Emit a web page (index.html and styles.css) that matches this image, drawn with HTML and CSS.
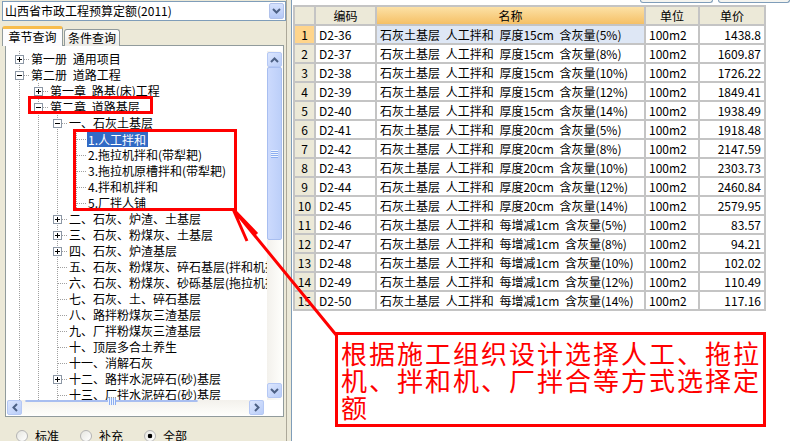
FILE: index.html
```html
<!DOCTYPE html>
<html lang="zh-CN">
<head>
<meta charset="utf-8">
<title>定额查询</title>
<link rel="stylesheet" href="styles.css">
</head>
<body>
<div class="app">
  <div class="left">
    <div class="combo">
      <span class="combo-text">山西省市政工程预算定额(2011)</span>
      <span class="combo-btn"><svg width="9" height="6" viewBox="0 0 9 6"><path d="M1 1l3.5 3.5L8 1" fill="none" stroke="#4D6185" stroke-width="2"/></svg></span>
    </div>
    <div class="tabs">
      <div class="tab active">章节查询</div>
      <div class="tab inactive">条件查询</div>
    </div>
    <div class="tabpage">
      <div class="treectl">
        <div class="tree-main">
          <div class="tree">
            <div class="row"><span class="br"><svg class="pm" width="9" height="9" viewBox="0 0 9 9"><rect x="0.5" y="0.5" width="8" height="8" fill="#fff" stroke="#8C97A5"/><path d="M2 4.5h5M4.5 2v5" stroke="#000"/></svg><i class="h"></i></span><span class="t">第一册 通用项目</span></div>
            <div class="row"><span class="br"><svg class="pm" width="9" height="9" viewBox="0 0 9 9"><rect x="0.5" y="0.5" width="8" height="8" fill="#fff" stroke="#8C97A5"/><path d="M2 4.5h5" stroke="#000"/></svg><i class="h"></i></span><span class="t">第二册 道路工程</span></div>
            <div class="row"><i class="g"></i><span class="br"><svg class="pm" width="9" height="9" viewBox="0 0 9 9"><rect x="0.5" y="0.5" width="8" height="8" fill="#fff" stroke="#8C97A5"/><path d="M2 4.5h5M4.5 2v5" stroke="#000"/></svg><i class="h"></i></span><span class="t">第一章 路基(床)工程</span></div>
            <div class="row"><i class="g"></i><span class="br"><svg class="pm" width="9" height="9" viewBox="0 0 9 9"><rect x="0.5" y="0.5" width="8" height="8" fill="#fff" stroke="#8C97A5"/><path d="M2 4.5h5" stroke="#000"/></svg><i class="h"></i></span><span class="t">第二章 道路基层</span></div>
            <div class="row"><i class="g"></i><i class="g"></i><span class="br"><svg class="pm" width="9" height="9" viewBox="0 0 9 9"><rect x="0.5" y="0.5" width="8" height="8" fill="#fff" stroke="#8C97A5"/><path d="M2 4.5h5" stroke="#000"/></svg><i class="h"></i></span><span class="t">一、石灰土基层</span></div>
            <div class="row"><i class="g"></i><i class="g"></i><i class="g"></i><span class="br leaf"><i class="h"></i></span><span class="t sel">1.人工拌和</span></div>
            <div class="row"><i class="g"></i><i class="g"></i><i class="g"></i><span class="br leaf"><i class="h"></i></span><span class="t">2.拖拉机拌和(带犁耙)</span></div>
            <div class="row"><i class="g"></i><i class="g"></i><i class="g"></i><span class="br leaf"><i class="h"></i></span><span class="t">3.拖拉机原槽拌和(带犁耙)</span></div>
            <div class="row"><i class="g"></i><i class="g"></i><i class="g"></i><span class="br leaf"><i class="h"></i></span><span class="t">4.拌和机拌和</span></div>
            <div class="row"><i class="g"></i><i class="g"></i><i class="g"></i><span class="br leaf last"><i class="h"></i></span><span class="t">5.厂拌人铺</span></div>
            <div class="row"><i class="g"></i><i class="g"></i><span class="br"><svg class="pm" width="9" height="9" viewBox="0 0 9 9"><rect x="0.5" y="0.5" width="8" height="8" fill="#fff" stroke="#8C97A5"/><path d="M2 4.5h5M4.5 2v5" stroke="#000"/></svg><i class="h"></i></span><span class="t">二、石灰、炉渣、土基层</span></div>
            <div class="row"><i class="g"></i><i class="g"></i><span class="br"><svg class="pm" width="9" height="9" viewBox="0 0 9 9"><rect x="0.5" y="0.5" width="8" height="8" fill="#fff" stroke="#8C97A5"/><path d="M2 4.5h5M4.5 2v5" stroke="#000"/></svg><i class="h"></i></span><span class="t">三、石灰、粉煤灰、土基层</span></div>
            <div class="row"><i class="g"></i><i class="g"></i><span class="br"><svg class="pm" width="9" height="9" viewBox="0 0 9 9"><rect x="0.5" y="0.5" width="8" height="8" fill="#fff" stroke="#8C97A5"/><path d="M2 4.5h5M4.5 2v5" stroke="#000"/></svg><i class="h"></i></span><span class="t">四、石灰、炉渣基层</span></div>
            <div class="row"><i class="g"></i><i class="g"></i><span class="br leaf"><i class="h"></i></span><span class="t">五、石灰、粉煤灰、碎石基层(拌和机拌和)</span></div>
            <div class="row"><i class="g"></i><i class="g"></i><span class="br leaf"><i class="h"></i></span><span class="t">六、石灰、粉煤灰、砂砾基层(拖拉机拌和)</span></div>
            <div class="row"><i class="g"></i><i class="g"></i><span class="br leaf"><i class="h"></i></span><span class="t">七、石灰、土、碎石基层</span></div>
            <div class="row"><i class="g"></i><i class="g"></i><span class="br leaf"><i class="h"></i></span><span class="t">八、路拌粉煤灰三渣基层</span></div>
            <div class="row"><i class="g"></i><i class="g"></i><span class="br leaf"><i class="h"></i></span><span class="t">九、厂拌粉煤灰三渣基层</span></div>
            <div class="row"><i class="g"></i><i class="g"></i><span class="br leaf"><i class="h"></i></span><span class="t">十、顶层多合土养生</span></div>
            <div class="row"><i class="g"></i><i class="g"></i><span class="br leaf"><i class="h"></i></span><span class="t">十一、消解石灰</span></div>
            <div class="row"><i class="g"></i><i class="g"></i><span class="br"><svg class="pm" width="9" height="9" viewBox="0 0 9 9"><rect x="0.5" y="0.5" width="8" height="8" fill="#fff" stroke="#8C97A5"/><path d="M2 4.5h5M4.5 2v5" stroke="#000"/></svg><i class="h"></i></span><span class="t">十二、路拌水泥碎石(砂)基层</span></div>
            <div class="row"><i class="g"></i><i class="g"></i><span class="br leaf"><i class="h"></i></span><span class="t">十三、厂拌水泥碎石(砂)基层</span></div>
          </div>
          <div class="vscroll">
            <div class="sb"><svg width="9" height="6" viewBox="0 0 9 6"><path d="M1 5l3.5-3.5L8 5" fill="none" stroke="#4D6185" stroke-width="2"/></svg></div>
            <div class="thumb v"><span class="grip v"></span></div>
            <div class="track"></div>
            <div class="sb"><svg width="9" height="6" viewBox="0 0 9 6"><path d="M1 1l3.5 3.5L8 1" fill="none" stroke="#4D6185" stroke-width="2"/></svg></div>
          </div>
        </div>
        <div class="hrow">
          <div class="hscroll">
            <div class="sb"><svg width="6" height="9" viewBox="0 0 6 9"><path d="M5 1L1.5 4.5L5 8" fill="none" stroke="#4D6185" stroke-width="2"/></svg></div>
            <div class="thumb h"><span class="grip h"></span></div>
            <div class="track"></div>
            <div class="sb"><svg width="6" height="9" viewBox="0 0 6 9"><path d="M1 1l3.5 3.5L1 8" fill="none" stroke="#4D6185" stroke-width="2"/></svg></div>
          </div>
          <div class="corner"></div>
        </div>
      </div>
    </div>
    <div class="radios">
      <label class="radio"><span class="dot"></span>标准</label>
      <label class="radio"><span class="dot"></span>补充</label>
      <label class="radio"><span class="dot on"></span>全部</label>
    </div>
  </div>
  <div class="splitter"></div>
  <div class="right">
    <div class="topbar"><span class="tbtn b1"></span><span class="tbtn b2"></span></div>
    <table class="grid">
      <thead>
        <tr><th class="c0"></th><th class="c1">编码</th><th class="c2 sorted">名称</th><th class="c3">单位</th><th class="c4">单价</th></tr>
      </thead>
      <tbody>
        <tr class="cur"><td class="n">1</td><td>D2-36</td><td class="nm">石灰土基层 人工拌和 厚度15cm 含灰量(5%)</td><td>100m2</td><td class="p">1438.8</td></tr>
        <tr><td class="n">2</td><td>D2-37</td><td class="nm">石灰土基层 人工拌和 厚度15cm 含灰量(8%)</td><td>100m2</td><td class="p">1609.87</td></tr>
        <tr><td class="n">3</td><td>D2-38</td><td class="nm">石灰土基层 人工拌和 厚度15cm 含灰量(10%)</td><td>100m2</td><td class="p">1726.22</td></tr>
        <tr><td class="n">4</td><td>D2-39</td><td class="nm">石灰土基层 人工拌和 厚度15cm 含灰量(12%)</td><td>100m2</td><td class="p">1849.41</td></tr>
        <tr><td class="n">5</td><td>D2-40</td><td class="nm">石灰土基层 人工拌和 厚度15cm 含灰量(14%)</td><td>100m2</td><td class="p">1938.49</td></tr>
        <tr><td class="n">6</td><td>D2-41</td><td class="nm">石灰土基层 人工拌和 厚度20cm 含灰量(5%)</td><td>100m2</td><td class="p">1918.48</td></tr>
        <tr><td class="n">7</td><td>D2-42</td><td class="nm">石灰土基层 人工拌和 厚度20cm 含灰量(8%)</td><td>100m2</td><td class="p">2147.59</td></tr>
        <tr><td class="n">8</td><td>D2-43</td><td class="nm">石灰土基层 人工拌和 厚度20cm 含灰量(10%)</td><td>100m2</td><td class="p">2303.73</td></tr>
        <tr><td class="n">9</td><td>D2-44</td><td class="nm">石灰土基层 人工拌和 厚度20cm 含灰量(12%)</td><td>100m2</td><td class="p">2460.84</td></tr>
        <tr><td class="n">10</td><td>D2-45</td><td class="nm">石灰土基层 人工拌和 厚度20cm 含灰量(14%)</td><td>100m2</td><td class="p">2579.95</td></tr>
        <tr><td class="n">11</td><td>D2-46</td><td class="nm">石灰土基层 人工拌和 每增减1cm 含灰量(5%)</td><td>100m2</td><td class="p">83.57</td></tr>
        <tr><td class="n">12</td><td>D2-47</td><td class="nm">石灰土基层 人工拌和 每增减1cm 含灰量(8%)</td><td>100m2</td><td class="p">94.21</td></tr>
        <tr><td class="n">13</td><td>D2-48</td><td class="nm">石灰土基层 人工拌和 每增减1cm 含灰量(10%)</td><td>100m2</td><td class="p">102.02</td></tr>
        <tr><td class="n">14</td><td>D2-49</td><td class="nm">石灰土基层 人工拌和 每增减1cm 含灰量(12%)</td><td>100m2</td><td class="p">110.49</td></tr>
        <tr><td class="n">15</td><td>D2-50</td><td class="nm">石灰土基层 人工拌和 每增减1cm 含灰量(14%)</td><td>100m2</td><td class="p">117.16</td></tr>
      </tbody>
    </table>
  </div>
</div>
<div class="note">根据施工组织设计选择人工、拖拉机、拌和机、厂拌合等方式选择定额</div>
<svg class="marks" width="795" height="441" viewBox="0 0 795 441">
  <rect x="29.5" y="97.5" width="122" height="15" fill="none" stroke="#FF0000" stroke-width="3"/>
  <rect x="74.5" y="130.5" width="161" height="79" fill="none" stroke="#FF0000" stroke-width="3"/>
  <path d="M233 209L337 336M233 209L257 234M233 209L247 241" fill="none" stroke="#FF0000" stroke-width="3"/>
</svg>
</body>
</html>
```
FILE: styles.css
```css
body {
  margin: 0;
  width: 795px;
  height: 441px;
  overflow: hidden;
  position: relative;
  background: #ECE9D8;
  font-family: "Noto Sans CJK SC", sans-serif;
  font-size: 12px;
  color: #000;
}

.app {
  display: flex;
  height: 441px;
}

/* ---------- left panel ---------- */
.left {
  width: 286px;
  flex: none;
}

.combo {
  margin: 1px 0 0 2px;
  width: 284px;
  height: 20px;
  box-sizing: border-box;
  border: 1px solid #7F9DB9;
  background: #fff;
  display: flex;
  align-items: center;
  justify-content: space-between;
}

.combo-text {
  padding-left: 2px;
  line-height: 16px;
  white-space: nowrap;
}

.combo-btn {
  width: 15px;
  height: 16px;
  margin-right: 1px;
  box-sizing: border-box;
  border: 1px solid #B1C2EB;
  border-radius: 2px;
  background: linear-gradient(#D6E2FD, #B4C8F6);
  display: flex;
  align-items: center;
  justify-content: center;
}

.tabs {
  display: flex;
  align-items: flex-end;
  margin-top: 5px;
  padding-left: 2px;
  height: 20px;
}

.tab {
  box-sizing: border-box;
  border: 1px solid #919B9C;
  border-bottom: none;
  border-radius: 3px 3px 0 0;
  text-align: center;
  white-space: nowrap;
}

.tab.active {
  width: 61px;
  height: 20px;
  border-top: 3px solid #F8BD4C;
  background: #FCFCFE;
  line-height: 16px;
  position: relative;
  z-index: 1;
}

.tab.inactive {
  width: 56px;
  height: 17px;
  margin-left: 1px;
  background: linear-gradient(#FFFFFF, #ECEBE6);
  line-height: 15px;
}

.tabpage {
  margin: -1px 0 0 5px;
  width: 279px;
  height: 372px;
  box-sizing: border-box;
  border: 1px solid #919B9C;
  background: #fff;
  padding: 5px 0 1px 0;
}

.treectl {
  display: flex;
  flex-direction: column;
  height: 364px;
}

.tree-main {
  display: flex;
  height: 349px;
}

.tree {
  flex: 1;
  min-width: 0;
  overflow: hidden;
  padding-left: 4px;
}

.row {
  display: flex;
  height: 16px;
  line-height: 16px;
  white-space: nowrap;
  word-spacing: 3px;
}

.g,
.br {
  flex: none;
  width: 19px;
  height: 16px;
  background-image: linear-gradient(#A0A0A0 50%, transparent 50%);
  background-size: 1px 2px;
  background-repeat: repeat-y;
  background-position: 9px 0;
}

.br {
  display: flex;
  align-items: center;
}

.br.last {
  background-size: 1px 2px;
  background-repeat: repeat-y;
  background-image: linear-gradient(#A0A0A0 50%, transparent 50%);
}

.pm {
  display: block;
  flex: none;
  margin-left: 5px;
}

.h {
  display: block;
  width: 5px;
  height: 0;
  border-top: 1px dotted #A0A0A0;
}

.leaf .h {
  margin-left: 10px;
  width: 9px;
}

.t {
  margin-left: 2px;
}

.t.sel {
  margin-left: 1px;
  padding: 0 2px 0 1px;
  height: 15px;
  line-height: 15px;
  margin-top: 1px;
  background: #316AC5;
  color: #fff;
}

/* scrollbars */
.vscroll {
  width: 15px;
  margin-right: 1px;
  flex: none;
  display: flex;
  flex-direction: column;
  padding: 1px 0 2px;
  box-sizing: border-box;
  background: linear-gradient(90deg, #F3F1EC, #FEFEFB);
}

.sb {
  flex: none;
  width: 15px;
  height: 15px;
  box-sizing: border-box;
  border: 1px solid #B5C8F4;
  border-radius: 2px;
  background: linear-gradient(135deg, #DCE6FE, #B9CDF8);
  display: flex;
  align-items: center;
  justify-content: center;
}

.thumb {
  box-sizing: border-box;
  border: 1px solid #A8BEF0;
  border-radius: 2px;
  display: flex;
  align-items: center;
  justify-content: center;
}

.thumb.v {
  height: 173px;
  background: linear-gradient(90deg, #CCDAFD, #BCCFF9);
}

.thumb.h {
  width: 173px;
  margin-left: 3px;
  background: linear-gradient(#CCDAFD, #BCCFF9);
}

.grip.v {
  width: 7px;
  height: 8px;
  background: repeating-linear-gradient(#EEF4FE 0 1px, #8CAEF0 1px 2px);
}

.grip.h {
  width: 8px;
  height: 7px;
  background: repeating-linear-gradient(90deg, #EEF4FE 0 1px, #8CAEF0 1px 2px);
}

.track {
  flex: 1;
}

.hrow {
  display: flex;
  height: 15px;
}

.hscroll {
  width: 257px;
  margin-left: 1px;
  display: flex;
  background: linear-gradient(#F3F1EC, #FEFEFB);
}

.corner {
  flex: 1;
  background: #fff;
}

/* radios */
.radios {
  display: flex;
  margin-top: 11px;
  padding-left: 16px;
  line-height: 16px;
}

.radio {
  width: 64px;
  display: flex;
  align-items: center;
}

.dot {
  width: 12px;
  height: 12px;
  margin-right: 7px;
  box-sizing: border-box;
  border: 1px solid #B4B4B4;
  border-radius: 50%;
  background: linear-gradient(135deg, #E6E6E0, #FFFFFF);
}

.dot.on {
  background: radial-gradient(circle, #000 0 2px, transparent 2.6px), linear-gradient(135deg, #E6E6E0, #FFFFFF);
}

/* ---------- splitter ---------- */
.splitter {
  flex: none;
  width: 6px;
  box-sizing: border-box;
  border-left: 1px solid #ACA899;
  border-right: 1px solid #7F9DB9;
}

/* ---------- right panel ---------- */
.right {
  flex: 1;
  background: #fff;
}

.topbar {
  height: 5px;
  display: flex;
  align-items: flex-start;
  padding-left: 348px;
}

.tbtn {
  height: 3px;
  box-sizing: border-box;
  border: 1px solid #7F9DB9;
  border-top: none;
  border-radius: 0 0 4px 4px;
  background: #F4F4F0;
}

.b1 { width: 73px; }
.b2 { width: 72px; margin-left: 5px; }

.grid {
  margin-left: 1px;
  width: 473px;
  table-layout: fixed;
  border-collapse: separate;
  border-spacing: 0;
  border-left: 2px solid #C4C4C4;
  border-top: 2px solid #C4C4C4;
  font-size: 12px;
}

.grid th,
.grid td {
  box-sizing: border-box;
  height: 19px;
  padding: 0 3px;
  border-right: 2px solid #C4C4C4;
  border-bottom: 2px solid #C4C4C4;
  line-height: 17px;
  white-space: nowrap;
  overflow: hidden;
  text-align: left;
}

.grid th {
  height: 19px;
  font-weight: normal;
  text-align: center;
  background: #ECE9D8;
}

.grid th.sorted {
  background: linear-gradient(#FCE1A6, #F5C066);
}

.c0 { width: 21px; }
.c1 { width: 61px; }
.c2 { width: 269px; }
.c3 { width: 54px; }
.c4 { width: 66px; }

.grid td.n {
  padding: 0;
  text-align: center;
  background: #ECE9D8;
}

.grid td.nm {
  word-spacing: 3px;
}

.grid td.p {
  text-align: right;
}

.grid tr.cur td.n {
  background: #FFD58C;
}

.grid tr.cur td.nm {
  background: #DEE7F5;
}

/* ---------- annotation overlay ---------- */
.note {
  position: absolute;
  left: 335px;
  top: 332px;
  width: 431px;
  height: 95px;
  box-sizing: border-box;
  border: 3px solid #FF0000;
  background: #fff;
  padding: 4px 2px 0 3px;
  color: #FF0000;
  font-size: 26px;
  line-height: 27px;
  letter-spacing: 2px;
}

.marks {
  position: absolute;
  left: 0;
  top: 0;
  pointer-events: none;
}
```
